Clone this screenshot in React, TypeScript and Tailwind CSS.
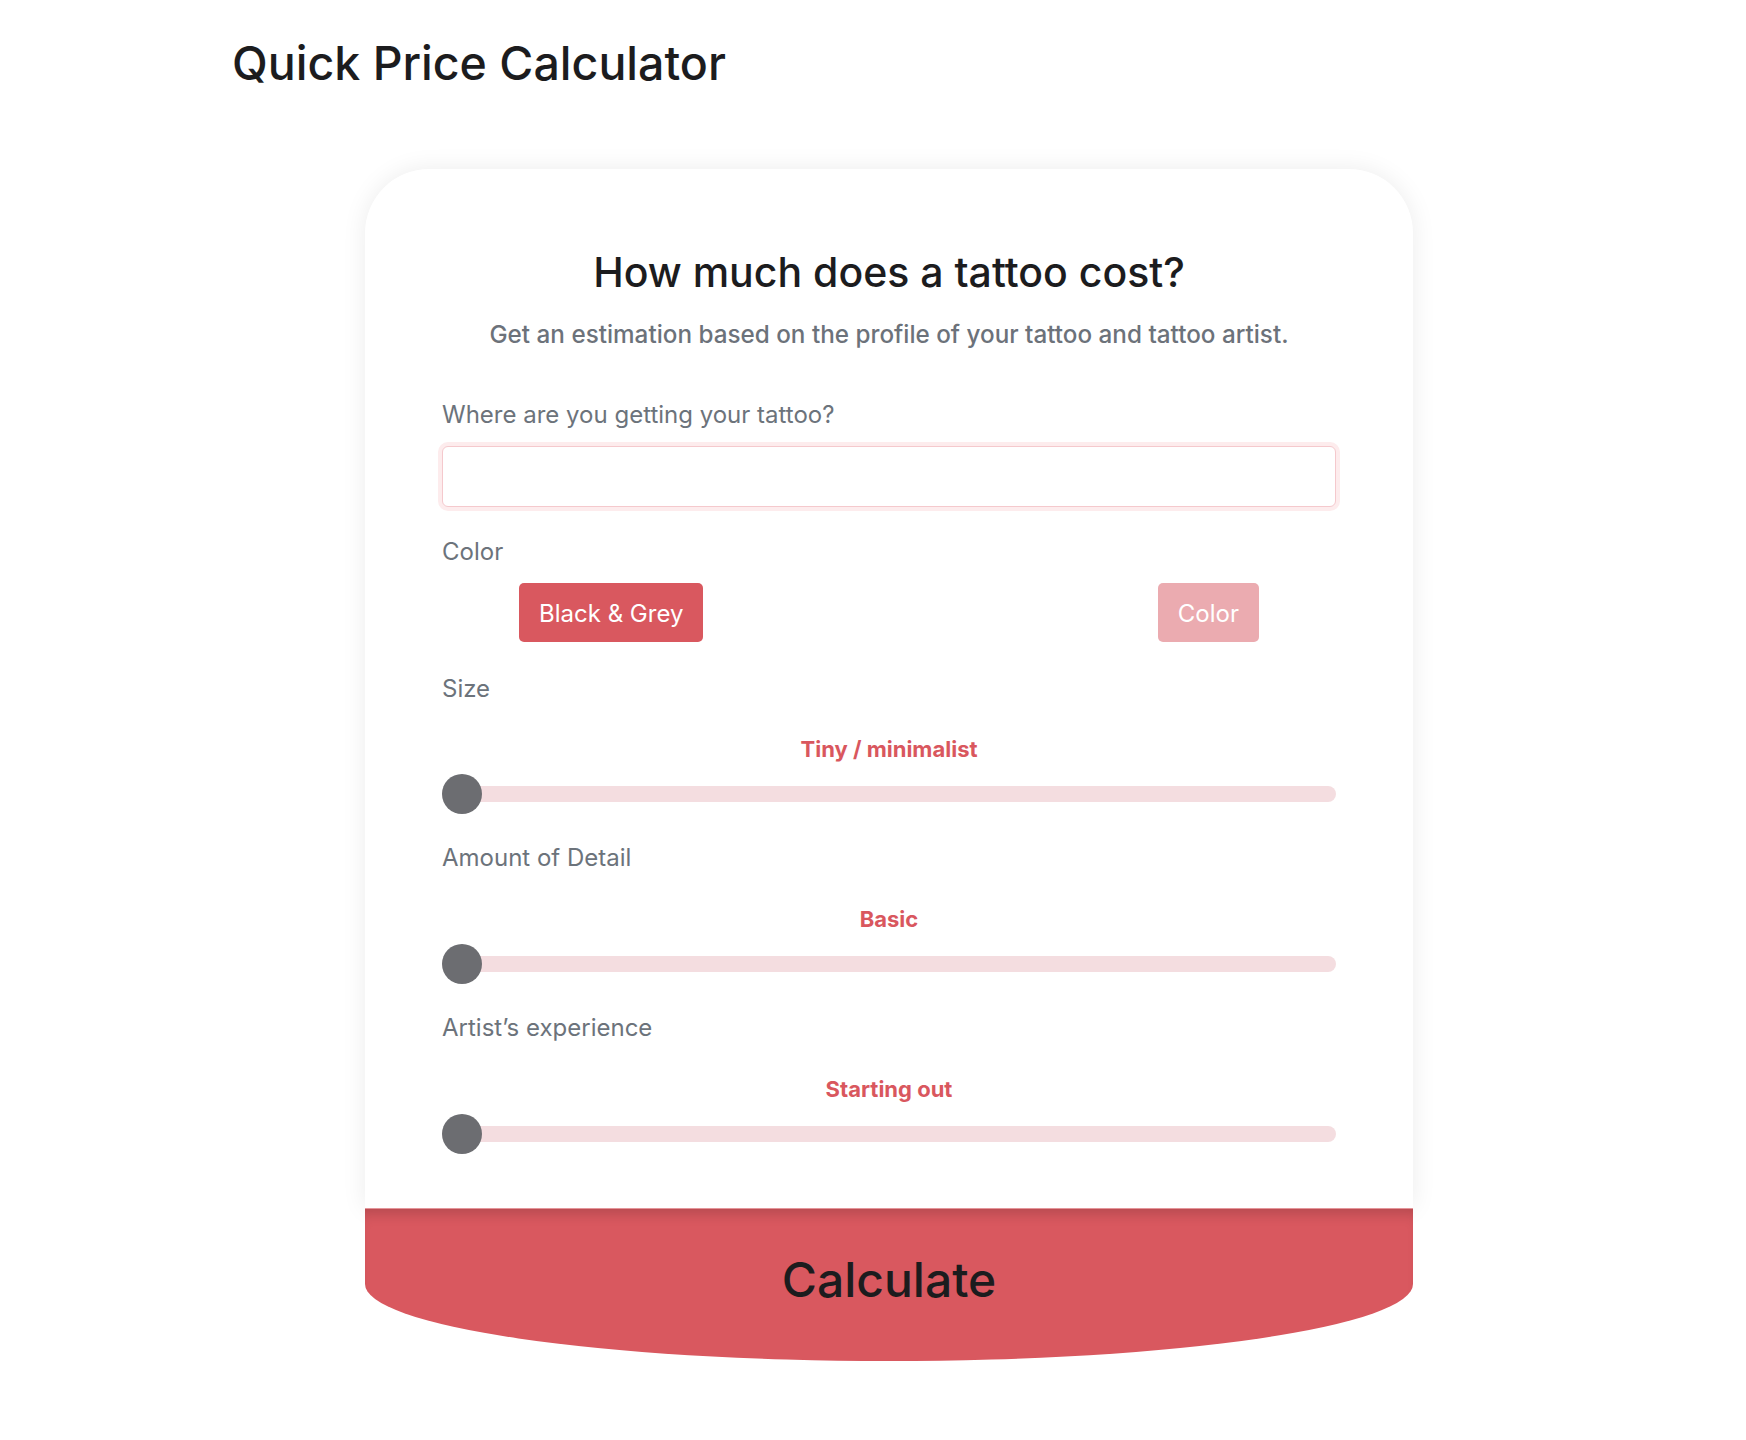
import React from "react";

function Slider({ value }: { value: string }) {
  return (
    <div className="flex flex-col">
      <div className="text-center text-[22px] leading-[34px] font-bold text-[#d9575e]">{value}</div>
      <div className="relative mt-[8px] flex h-[40px] items-center">
        <div className="h-[16px] w-full rounded-full bg-[#f4dde0]" />
        <div className="absolute left-0 top-0 h-[40px] w-[40px] rounded-full bg-[#6c6d71]" />
      </div>
    </div>
  );
}

export default function App() {
  return (
    <div
      className="min-h-screen bg-white pb-[80px]"
      style={{ fontFamily: "Inter, 'Noto Sans', sans-serif" }}
    >
      <h1 className="pl-[232px] pt-[34px] text-[46.5px] font-medium leading-[58px] text-[#1c1c1e]">
        Quick Price Calculator
      </h1>
      <div className="ml-[365px] mt-[77px] w-[1048px]">
        <div className="rounded-t-[64px] bg-white px-[77px] pb-[54px] pt-[77px] shadow-[0_0_24px_rgba(0,0,0,0.08)]">
          <h2 className="text-center text-[41px] font-medium leading-[53px] text-[#1c1c1e]">
            How much does a tattoo cost?
          </h2>
          <p className="mt-[16px] text-center text-[24.25px] font-medium leading-[39px] text-[#6c727a]">
            Get an estimation based on the profile of your tattoo and tattoo artist.
          </p>

          <label className="mt-[42px] block text-[24px] leading-[37px] text-[#6c737b]">
            Where are you getting your tattoo?
          </label>
          <input
            type="text"
            className="mt-[13px] block h-[61px] w-full rounded-[6px] border border-[#f5c9cd] bg-white px-4 text-[24px] outline-none ring-4 ring-[#fdeced]"
          />

          <div className="mt-[26px] text-[24px] leading-[37px] text-[#6c737b]">Color</div>
          <div className="mt-[13px] flex justify-between px-[77px]">
            <button className="h-[59px] rounded-[5px] bg-[#d9585f] px-[20px] pt-[2px] text-[24px] text-white">
              Black &amp; Grey
            </button>
            <button className="h-[59px] rounded-[5px] bg-[#ebabb0] px-[20px] pt-[2px] text-[24px] text-white">
              Color
            </button>
          </div>

          <div className="mt-[28px] text-[24px] leading-[37px] text-[#6c737b]">Size</div>
          <div className="mt-[25px]">
            <Slider value="Tiny / minimalist" />
          </div>

          <div className="mt-[25px] text-[24px] leading-[37px] text-[#6c737b]">Amount of Detail</div>
          <div className="mt-[26px]">
            <Slider value="Basic" />
          </div>

          <div className="mt-[25px] text-[24px] leading-[37px] text-[#6c737b]">Artist’s experience</div>
          <div className="mt-[26px]">
            <Slider value="Starting out" />
          </div>
        </div>
        <button className="relative z-10 flex h-[153px] w-full items-start justify-center rounded-b-[50%_77px] border-t border-[#e4959a] bg-[#d9585f] pt-[42px] text-[48px] font-medium leading-[58px] text-[#1c1c1e] shadow-[inset_0_12px_14px_-8px_rgba(0,0,0,0.18)]">
          Calculate
        </button>
      </div>
    </div>
  );
}
